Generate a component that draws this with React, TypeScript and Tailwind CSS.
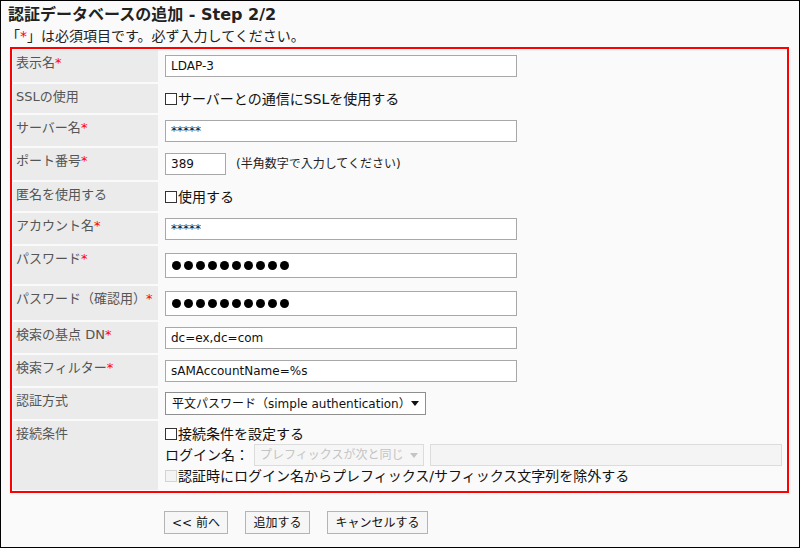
import React from 'react';

function Req() {
  return <span className="text-[#ff0000]">*</span>;
}

function Box({ disabled }: { disabled?: boolean }) {
  return (
    <span
      className={
        disabled
          ? 'inline-block w-[12px] h-[12px] border border-[#d4d4d4] bg-[#f4f4f4] mr-[1px] shrink-0'
          : 'inline-block w-[12px] h-[12px] border border-[#333333] bg-white mr-[1px] shrink-0'
      }
    />
  );
}

function TextInput({ value, w }: { value: string; w: string }) {
  return (
    <input
      readOnly
      value={value}
      className={`${w} h-[22px] border border-[#a8a8a8] bg-white px-[5px] text-[12px] text-[#111] outline-none`}
    />
  );
}

function Password() {
  const dots = Array.from({ length: 10 });
  return (
    <div className="w-[352px] h-[25px] border border-[#a8a8a8] bg-white flex items-center pl-[6px] gap-[3px]">
      {dots.map((_, i) => (
        <span key={i} className="inline-block w-[9px] h-[9px] rounded-full bg-black" />
      ))}
    </div>
  );
}

type Row = {
  label: React.ReactNode;
  h: string;
  content: React.ReactNode;
  top?: boolean;
};

export default function App() {
  const rows: Row[] = [
    { label: <>表示名<Req /></>, h: 'h-[32px]', content: <TextInput value="LDAP-3" w="w-[352px]" /> },
    {
      label: 'SSLの使用',
      h: 'h-[29px]',
      content: (
        <div className="flex items-center text-[14px] leading-[20px]">
          <Box />
          サーバーとの通信にSSLを使用する
        </div>
      ),
    },
    { label: <>サーバー名<Req /></>, h: 'h-[31px]', content: <TextInput value="*****" w="w-[352px]" /> },
    {
      label: <>ポート番号<Req /></>,
      h: 'h-[32px]',
      content: (
        <div className="flex items-center">
          <TextInput value="389" w="w-[61px]" />
          <span className="ml-[10px] text-[12px] text-[#222]">(半角数字で入力してください)</span>
        </div>
      ),
    },
    {
      label: '匿名を使用する',
      h: 'h-[29px]',
      content: (
        <div className="flex items-center text-[14px] leading-[20px]">
          <Box />
          使用する
        </div>
      ),
    },
    { label: <>アカウント名<Req /></>, h: 'h-[31px]', content: <TextInput value="*****" w="w-[352px]" /> },
    { label: <>パスワード<Req /></>, h: 'h-[38px]', content: <Password /> },
    { label: <>パスワード（確認用）<Req /></>, h: 'h-[34px]', content: <Password /> },
    { label: <>検索の基点 DN<Req /></>, h: 'h-[31px]', content: <TextInput value="dc=ex,dc=com" w="w-[352px]" /> },
    { label: <>検索フィルター<Req /></>, h: 'h-[31px]', content: <TextInput value="sAMAccountName=%s" w="w-[352px]" /> },
    {
      label: '認証方式',
      h: 'h-[31px]',
      content: (
        <div className="w-[261px] h-[23px] border border-[#8f8f8f] bg-white flex items-center justify-between pl-[6px] pr-[6px] text-[12px] text-[#111]">
          <span>平文パスワード（simple authentication）</span>
          <svg width="8" height="5" viewBox="0 0 8 5">
            <path d="M0 0 H8 L4 5 Z" fill="#111" />
          </svg>
        </div>
      ),
    },
    {
      label: '接続条件',
      h: 'h-[69px]',
      top: true,
      content: (
        <div className="flex flex-col pt-[3px] text-[14px] leading-[20px] text-[#111]">
          <div className="flex items-center">
            <Box />
            接続条件を設定する
          </div>
          <div className="flex items-center h-[22px]">
            <span>ログイン名：</span>
            <div className="ml-[5px] w-[170px] h-[22px] border border-[#dcdcdc] bg-[#f6f6f6] flex items-center justify-between pl-[5px] pr-[5px] text-[12px] text-[#c4c4c4]">
              <span>プレフィックスが次と同じ</span>
              <svg width="8" height="5" viewBox="0 0 8 5">
                <path d="M0 0 H8 L4 5 Z" fill="#c4c4c4" />
              </svg>
            </div>
            <div className="ml-[6px] w-[352px] h-[22px] border border-[#dcdcdc] bg-[#f4f4f4]" />
          </div>
          <div className="flex items-center">
            <Box disabled />
            認証時にログイン名からプレフィックス/サフィックス文字列を除外する
          </div>
        </div>
      ),
    },
  ];

  return (
    <div className="w-[800px] h-[548px] border border-black bg-[#fafafa] text-[#111] font-['DejaVu_Sans','Noto_Sans_CJK_JP',sans-serif] overflow-hidden">
      <div className="pl-[7px] pt-[3px] text-[16px] leading-[22px] font-bold text-[#222]">
        認証データベースの追加 - Step 2/2
      </div>
      <div className="pl-[5px] text-[14px] leading-[20px] text-[#222]">
        「<span className="text-[#ff0000]">*</span>」は必須項目です。必ず入力してください。
      </div>
      <div className="ml-[9px] mt-[1px] w-[779px] border-2 border-[#ff0000] p-[1px] flex flex-col gap-[2px]">
        {rows.map((r, i) => (
          <div key={i} className={`flex ${r.h}`}>
            <div className="w-[145px] shrink-0 bg-[#ebebeb] pl-[3px] pt-[4px] text-[13px] leading-[18px] text-[#555]">
              {r.label}
            </div>
            <div className={r.top ? 'flex-1 pl-[7px] flex items-start' : 'flex-1 pl-[7px] flex items-center'}>
              {r.content}
            </div>
          </div>
        ))}
      </div>
      <div className="mt-[18px] pl-[163px] flex gap-[17px] text-[12px] text-[#111]">
        <button className="h-[23px] w-[64px] border border-[#b4b4b4] bg-[#f6f6f6]">&lt;&lt; 前へ</button>
        <button className="h-[23px] w-[65px] border border-[#b4b4b4] bg-[#f6f6f6]">追加する</button>
        <button className="h-[23px] w-[101px] border border-[#b4b4b4] bg-[#f6f6f6]">キャンセルする</button>
      </div>
    </div>
  );
}
